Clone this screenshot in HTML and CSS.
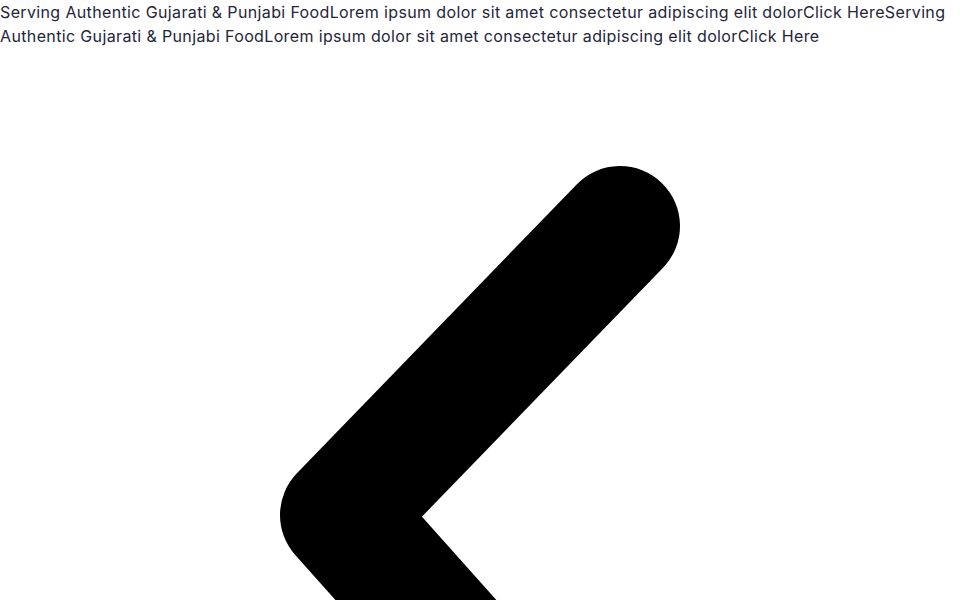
FILE: index.html
```html
<!DOCTYPE html>
<html lang="en">
<head>
<meta charset="utf-8">
<title>Offer bar</title>
<link rel="stylesheet" href="styles.css">
</head>
<body>
<div class="ticker">
  <span class="ticker-title">Serving Authentic Gujarati &amp; Punjabi Food</span><span class="ticker-text">Lorem ipsum dolor sit amet consectetur adipiscing elit dolor</span><a class="ticker-link">Click Here</a><span class="ticker-title">Serving Authentic Gujarati &amp; Punjabi Food</span><span class="ticker-text">Lorem ipsum dolor sit amet consectetur adipiscing elit dolor</span><a class="ticker-link">Click Here</a>
</div>
<svg class="chevron" viewBox="0 48 960 820" xmlns="http://www.w3.org/2000/svg" aria-hidden="true">
  <polyline points="620,226 340,515 606,813" fill="none" stroke="#000" stroke-width="120" stroke-linecap="round" stroke-linejoin="round"/>
</svg>
</body>
</html>
```
FILE: styles.css
```css
html, body {
  margin: 0;
  padding: 0;
  background: #ffffff;
}
body {
  font-family: Inter, "Noto Sans", sans-serif;
  font-size: 16px;
  line-height: 24px;
  letter-spacing: 0.36px;
  color: #23253a;
}
.ticker {
  display: block;
}
.ticker-link {
  color: inherit;
  text-decoration: none;
}
.chevron {
  display: block;
  width: 960px;
  height: 820px;
}
```
